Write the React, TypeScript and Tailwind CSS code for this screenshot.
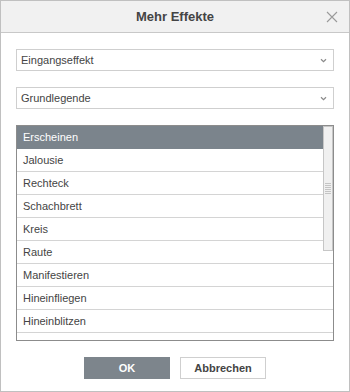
import React from 'react';

const items = ['Erscheinen', 'Jalousie', 'Rechteck', 'Schachbrett', 'Kreis', 'Raute', 'Manifestieren', 'Hineinfliegen', 'Hineinblitzen', ''];

const Chevron = () => (
    <svg width="7" height="5" viewBox="0 0 7 5" className="shrink-0">
        <path d="M1 1.2 L3.5 3.6 L6 1.2" fill="none" stroke="#8a8a8a" strokeWidth="1.2" />
    </svg>
);

const Select: React.FC<{ value: string }> = ({ value }) => (
    <div className="h-[22px] flex items-center justify-between border border-[#cfcfcf] bg-white pl-[4px] pr-[6px] text-[11px] text-[#444]">
        <span>{value}</span>
        <Chevron />
    </div>
);

const App: React.FC = () => {
    return (
        <div className="w-[350px] h-[392px] border border-[#c0c0c0] bg-white flex flex-col" style={{ fontFamily: '"Liberation Sans", Arial, sans-serif' }}>
            <header className="h-[32px] shrink-0 bg-[#f1f1f1] border-b border-[#c8c8c8] relative flex items-center justify-center">
                <h1 className="text-[13px] font-bold text-[#444]">Mehr Effekte</h1>
                <svg width="12" height="12" viewBox="0 0 12 12" className="absolute right-[11px] top-[10px]">
                    <path d="M1 1 L11 11 M11 1 L1 11" stroke="#9a9a9a" strokeWidth="1.1" />
                </svg>
            </header>

            <main className="flex-1 flex flex-col px-[15px] pt-[16px]">
                <Select value="Eingangseffekt" />
                <div className="mt-[16px]">
                    <Select value="Grundlegende" />
                </div>

                <div className="mt-[16px] h-[216px] border border-[#8c8c8c] relative overflow-hidden">
                    {items.map((label, i) => (
                        <div
                            key={i}
                            className={
                                i === 0
                                    ? 'h-[23px] -mt-px pt-px box-content flex items-center pl-[6px] bg-[#7b848c] text-white text-[11px]'
                                    : 'h-[23px] flex items-center pl-[6px] border-b border-[#d4d4d4] text-[#444] text-[11px]'
                            }
                        >
                            {label}
                        </div>
                    ))}
                    <div className="absolute right-0 top-0 w-[10px] h-[125px] bg-[#f0f0f0] border border-[#c6c6c6] flex flex-col items-center justify-center gap-[1px]">
                        {[0, 1, 2, 3, 4, 5].map(n => (
                            <div key={n} className="w-[6px] h-px bg-[#c4c4c4]" />
                        ))}
                    </div>
                </div>

                <div className="mt-[16px] flex justify-center gap-[10px]">
                    <button className="w-[86px] h-[22px] bg-[#7d858c] text-white text-[11px] font-bold">OK</button>
                    <button className="w-[86px] h-[22px] border border-[#cfcfcf] bg-white text-[#444] text-[11px] font-bold">Abbrechen</button>
                </div>
            </main>
        </div>
    );
};

export default App;
